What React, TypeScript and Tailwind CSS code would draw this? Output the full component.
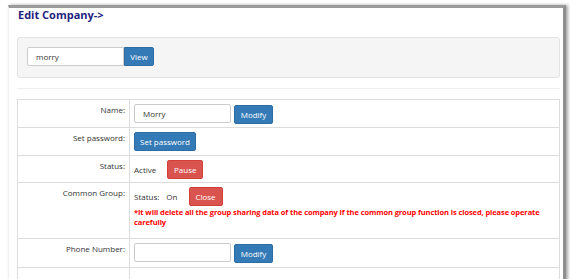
import React from 'react'

const rows = 'border-t border-[#dddddd]'

function Btn({ color, children, className = '' }: { color: 'blue' | 'red'; children: React.ReactNode; className?: string }) {
  const c = color === 'blue' ? 'bg-[#337ab7] border-[#2e6da4]' : 'bg-[#d9534f] border-[#d43f3a]'
  return (
    <button className={`${c} border text-white rounded-[2px] h-[19px] text-[8px] leading-none ${className}`}>
      {children}
    </button>
  )
}

export default function App() {
  return (
    <div
      className="w-[570px] h-[279px] bg-white overflow-hidden text-[#333333]"
      style={{ fontFamily: '"Open Sans", "Noto Sans", sans-serif' }}
    >
      <div className="ml-[8px] mt-[5px] w-[558px] h-[300px] border-t-[3px] border-t-[#9b9b9b] border-r-[3px] border-r-[#8e8e8e] border-l border-l-[#f0f0f0] shadow-[2px_0_3px_rgba(0,0,0,0.35)] pl-[8px] pr-[3px]">
        <div className="text-[11px] font-bold leading-[14px] text-[#1f2380] pl-[1px]">Edit Company-&gt;</div>

        <div className="mt-[15px] h-[41px] bg-[#f5f5f5] border border-[#e3e3e3] rounded-[3px] pl-[9px] pt-[9px]">
          <div className="flex">
            <input
              defaultValue="morry"
              className="w-[97px] h-[19px] border border-[#cccccc] rounded-l-[2px] bg-white pl-[8px] text-[8px] outline-none"
            />
            <Btn color="blue" className="w-[30px] rounded-l-none">View</Btn>
          </div>
        </div>

        <div className="mt-[10px] h-px bg-[#eeeeee]" />

        <div className="mt-[10px] border-l border-r border-[#dddddd] text-[8px]">
          {/* Name */}
          <div className={`${rows} flex h-[28px]`}>
            <div className="w-[112px] border-r border-[#dddddd] text-right pr-[4px] pt-[4px] leading-[12px]">Name:</div>
            <div className="flex pl-[4px] pt-[4px] gap-[3px]">
              <input
                defaultValue="Morry"
                className="w-[97px] h-[19px] border border-[#cccccc] rounded-[2px] bg-white pl-[8px] text-[8px] outline-none"
              />
              <Btn color="blue" className="w-[39px] mt-[1px] h-[18px]">Modify</Btn>
            </div>
          </div>

          {/* Set password */}
          <div className={`${rows} flex h-[28px]`}>
            <div className="w-[112px] border-r border-[#dddddd] text-right pr-[4px] pt-[4px] leading-[12px]">Set password:</div>
            <div className="pl-[4px] pt-[4px]">
              <Btn color="blue" className="w-[62px]">Set password</Btn>
            </div>
          </div>

          {/* Status */}
          <div className={`${rows} flex h-[27px]`}>
            <div className="w-[112px] border-r border-[#dddddd] text-right pr-[4px] pt-[4px] leading-[12px]">Status:</div>
            <div className="flex items-center pl-[4px] pt-[4px] self-start h-[23px]">
              <span>Active</span>
              <Btn color="red" className="w-[36px] ml-[11px] h-[18px]">Pause</Btn>
            </div>
          </div>

          {/* Common Group */}
          <div className={`${rows} flex h-[56px]`}>
            <div className="w-[112px] shrink-0 border-r border-[#dddddd] text-right pr-[4px] pt-[4px] leading-[12px]">Common Group:</div>
            <div className="pl-[4px] pt-[4px]">
              <div className="flex items-center h-[19px]">
                <span>Status:</span>
                <span className="ml-[7px]">On</span>
                <Btn color="red" className="w-[34px] ml-[11px]">Close</Btn>
              </div>
              <p className="text-[#ff0000] font-bold text-[7.5px] tracking-[-0.1px] leading-[10px] mt-[1px]">
                *It will delete all the group sharing data of the company if the common group function is closed, please operate carefully
              </p>
            </div>
          </div>

          {/* Phone Number */}
          <div className={`${rows} flex h-[29px]`}>
            <div className="w-[112px] border-r border-[#dddddd] text-right pr-[4px] pt-[4px] leading-[12px]">Phone Number:</div>
            <div className="flex pl-[4px] pt-[4px] gap-[3px]">
              <input className="w-[97px] h-[19px] border border-[#cccccc] rounded-[2px] bg-white pl-[8px] text-[8px] outline-none" />
              <Btn color="blue" className="w-[39px] mt-[1px] h-[18px]">Modify</Btn>
            </div>
          </div>

          <div className={`${rows} flex h-[30px]`}>
            <div className="w-[112px] border-r border-[#dddddd]" />
          </div>
        </div>
      </div>
    </div>
  )
}
